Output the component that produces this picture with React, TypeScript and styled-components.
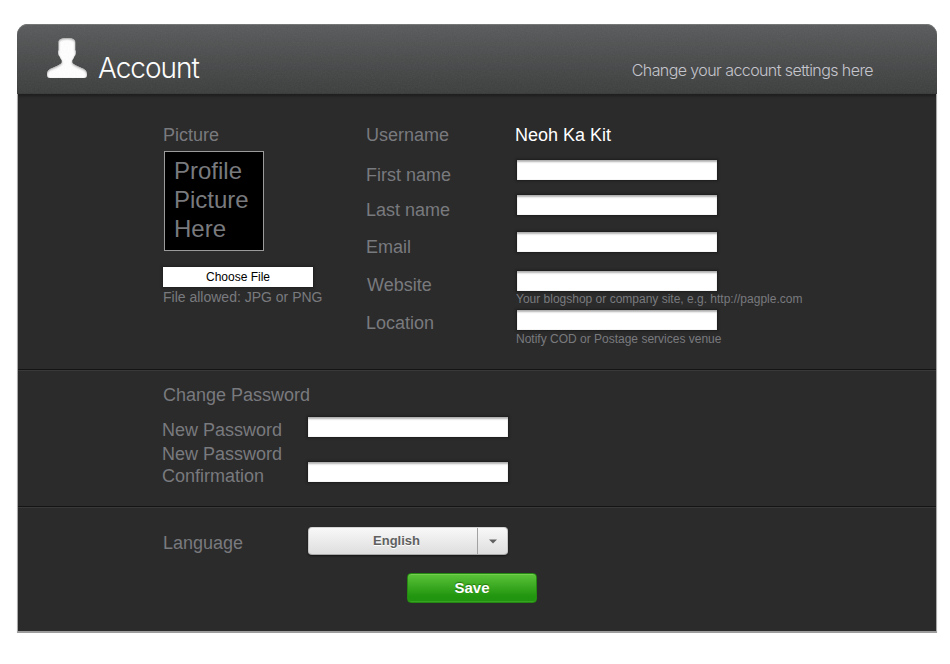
import React from "react";
import styled, { createGlobalStyle } from "styled-components";

const GlobalStyle = createGlobalStyle`
  * { box-sizing: border-box; }
  body { margin: 0; background: #fff; font-family: "Liberation Sans", Arial, sans-serif; }
  button, input { font-family: inherit; }
`;

const Panel = styled.main`
  width: 920px;
  margin: 24px 0 0 17px;
`;

const Header = styled.header`
  position: relative;
  height: 70px;
  display: flex;
  align-items: flex-start;
  padding: 13px 64px 0 29px;
  border-radius: 11px 11px 0 0;
  overflow: hidden;
  background: linear-gradient(#595b5c, #3c3d3d);
  box-shadow: inset 0 1px 0 #747676, inset 0 -1px 0 #383939;
`;

const Grain = styled.svg`
  position: absolute;
  inset: 0;
  width: 100%;
  height: 100%;
  opacity: 0.07;
`;

const PersonIcon = styled.svg`
  width: 42px;
  height: 42px;
  flex: none;
`;

const Title = styled.h1`
  margin: 14px 0 0 10px;
  font: 300 28px/34px Inter, "Liberation Sans", sans-serif;
  letter-spacing: -1px;
  color: #fff;
`;

const Subtitle = styled.p`
  margin: 23px 0 0 auto;
  font: 300 16px/20px Inter, "Liberation Sans", sans-serif;
  letter-spacing: -0.58px;
  color: #c6c6ce;
  white-space: nowrap;
`;

const Body = styled.form`
  display: block;
  width: 920px;
  height: 539px;
  border: 1px solid #a9a9a9;
  border-top: 0;
  border-bottom: 2px solid #9c9c9c;
  background: #2b2b2b;
  box-shadow: inset 0 4px 3px -2px #1d1d1d, 0 1px 1px #ddd;
  color: #797a7e;
  font-size: 18px;
  line-height: 22px;
`;

const Section = styled.section<{ $height: number; $top: number }>`
  height: ${(p) => p.$height}px;
  padding: ${(p) => p.$top}px 0 0 145px;
  & + & {
    border-top: 1px solid #141414;
    box-shadow: inset 0 1px 0 #393939;
  }
`;

const Profile = styled(Section)`
  display: grid;
  grid-template-columns: 203px 1fr;
`;

const Avatar = styled.div`
  width: 100px;
  height: 100px;
  margin: 5px 0 16px 1px;
  padding: 4px 0 0 9px;
  border: 1px solid #9b9b9b;
  background: #000;
  font-size: 24px;
  line-height: 29px;
`;

const FileButton = styled.button`
  display: block;
  width: 150px;
  height: 20px;
  padding: 0;
  border: 0;
  background: #fff;
  box-shadow: 0 0 2px 1px #1f1f1f;
  color: #000;
  font-size: 12px;
  line-height: 20px;
`;

const FileNote = styled.div`
  font-size: 14px;
  line-height: 21px;
  white-space: nowrap;
`;

const Row = styled.div<{ $height: number; $label: number }>`
  display: grid;
  grid-template-columns: ${(p) => p.$label}px 1fr;
  align-items: start;
  height: ${(p) => p.$height}px;
`;

const Label = styled.label<{ $drop?: number; $shift?: number }>`
  padding-top: ${(p) => p.$drop ?? 0}px;
  margin-left: ${(p) => p.$shift ?? 0}px;
  white-space: pre-line;
`;

const ConfirmLabel = styled(Label)`
  margin-top: -19px;
`;

const Username = styled.strong`
  font-weight: 400;
  color: #fff;
`;

const Input = styled.input`
  display: block;
  width: 200px;
  height: 20px;
  padding: 0 4px;
  border: 0;
  border-radius: 0;
  outline: 0;
  background: #fff;
  box-shadow: inset 0 3px 2px -1px #b3b3b3, inset 0 1px 0 #b0adae,
    inset 0 0 1px #aaa, 0 0 2px 1px #1c1c1c;
`;

const FieldBox = styled.div`
  padding-left: 1px;
`;

const Hint = styled.div<{ $drop?: number }>`
  margin: ${(p) => p.$drop ?? 0}px 0 0 -1px;
  font-size: 12px;
  line-height: 16px;
  white-space: nowrap;
`;

const Select = styled.button`
  display: grid;
  grid-template-columns: 1fr 30px;
  width: 200px;
  height: 28px;
  padding: 0;
  border: 1px solid #c3c3c3;
  border-color: #d5d5d5 #c8c8c8 #a9a9a9;
  border-radius: 4px;
  background: linear-gradient(#f8f8f8, #dedede);
  box-shadow: 0 1px 2px #151515;
  color: #606060;
  font-size: 13px;
  font-weight: 700;
  line-height: 26px;
  text-shadow: 0 1px 0 #fff;
`;

const Choice = styled.span`
  padding-left: 7px;
  text-align: center;
`;

const Arrow = styled.span`
  display: flex;
  align-items: center;
  justify-content: center;
  height: 26px;
  border-left: 1px solid #a2a2a2;
`;

const Save = styled.button`
  display: block;
  width: 130px;
  height: 30px;
  margin: 18px 0 0 244px;
  padding: 0;
  border: 1px solid #248812;
  border-radius: 4px;
  background: linear-gradient(#5bc33a, #22960f 78%, #219210);
  box-shadow: inset 0 1px 0 #72d04e, inset 0 -1px 0 #36a421;
  color: #fff;
  font-size: 15px;
  font-weight: 700;
  line-height: 28px;
  text-shadow: 0 -1px 1px #24720f;
`;

const fields = [
  { name: "First name", height: 35, drop: 4 },
  { name: "Last name", height: 37, drop: 4 },
  { name: "Email", height: 39, drop: 4 },
  { name: "Website", height: 39, drop: 3, shift: 1, hint: "Your blogshop or company site, e.g. http://pagple.com" },
  { name: "Location", height: 39, drop: 2, hint: "Notify COD or Postage services venue", hintDrop: 1 },
];

export default function App() {
  return (
    <>
      <GlobalStyle />
      <Panel>
        <Header>
          <Grain>
            <filter id="grain">
              <feTurbulence type="fractalNoise" baseFrequency="0.7" numOctaves="2" />
              <feColorMatrix type="saturate" values="0" />
            </filter>
            <rect width="100%" height="100%" filter="url(#grain)" />
          </Grain>
          <PersonIcon viewBox="0 0 42 42">
            <defs>
              <filter id="inset">
                <feOffset in="SourceAlpha" dy="1" result="o" />
                <feGaussianBlur in="o" stdDeviation="0.8" result="b" />
                <feComposite in="SourceAlpha" in2="b" operator="out" result="edge" />
                <feFlood floodColor="#8c8c8c" />
                <feComposite in2="edge" operator="in" result="shade" />
                <feMerge><feMergeNode in="SourceGraphic" /><feMergeNode in="shade" /></feMerge>
              </filter>
            </defs>
            <path filter="url(#inset)" fill="#fff" d="M12.6 5C12.6 2.3 16 1 21 1S29.2 2.3 29.2 5V13Q30.4 14 29.6 17Q29.2 19 28.4 19.2Q27.8 21.5 26.2 23.5V25.5Q27.5 27.8 34 30.3C38.5 32 41 33.5 41 37.5Q41 41 38 41H4Q1 41 1 37.5C1 33.5 3.5 32 8 30.3Q14.5 27.8 15.8 25.5V23.5Q14.2 21.5 13.5 19.2Q12.7 19 12.3 17Q11.6 14 12.6 13Z" />
          </PersonIcon>
          <Title>Account</Title>
          <Subtitle>Change your account settings here</Subtitle>
        </Header>
        <Body>
          <Profile $height={275} $top={30}>
            <div>
              <Label as="div">Picture</Label>
              <Avatar>Profile<br />Picture<br />Here</Avatar>
              <FileButton type="button">Choose File</FileButton>
              <FileNote>File allowed: JPG or PNG</FileNote>
            </div>
            <div>
              <Row $height={36} $label={149}>
                <Label as="div">Username</Label>
                <Username>Neoh Ka Kit</Username>
              </Row>
              {fields.map((f) => (
                <Row key={f.name} $height={f.height} $label={150}>
                  <Label htmlFor={f.name} $drop={f.drop} $shift={f.shift}>{f.name}</Label>
                  <FieldBox>
                    <Input id={f.name} />
                    {f.hint && <Hint $drop={f.hintDrop}>{f.hint}</Hint>}
                  </FieldBox>
                </Row>
              ))}
            </div>
          </Profile>
          <Section $height={137} $top={14}>
            <Row $height={33} $label={300}><Label as="div">Change Password</Label></Row>
            <Row $height={45} $label={145}>
              <Label htmlFor="password" $drop={2} $shift={-1}>New Password</Label>
              <Input id="password" type="password" />
            </Row>
            <Row $height={20} $label={145}>
              <ConfirmLabel htmlFor="confirmation" $shift={-1}>{"New Password\nConfirmation"}</ConfirmLabel>
              <Input id="confirmation" type="password" />
            </Row>
          </Section>
          <Section $height={124} $top={20}>
            <Row $height={28} $label={145}>
              <Label as="div" $drop={5}>Language</Label>
              <Select type="button">
                <Choice>English</Choice>
                <Arrow>
                  <svg width="8" height="5" viewBox="0 0 8 5"><path d="M0 .5H8L4 4.5Z" fill="#606060" /></svg>
                </Arrow>
              </Select>
            </Row>
            <Save type="button">Save</Save>
          </Section>
        </Body>
      </Panel>
    </>
  );
}
